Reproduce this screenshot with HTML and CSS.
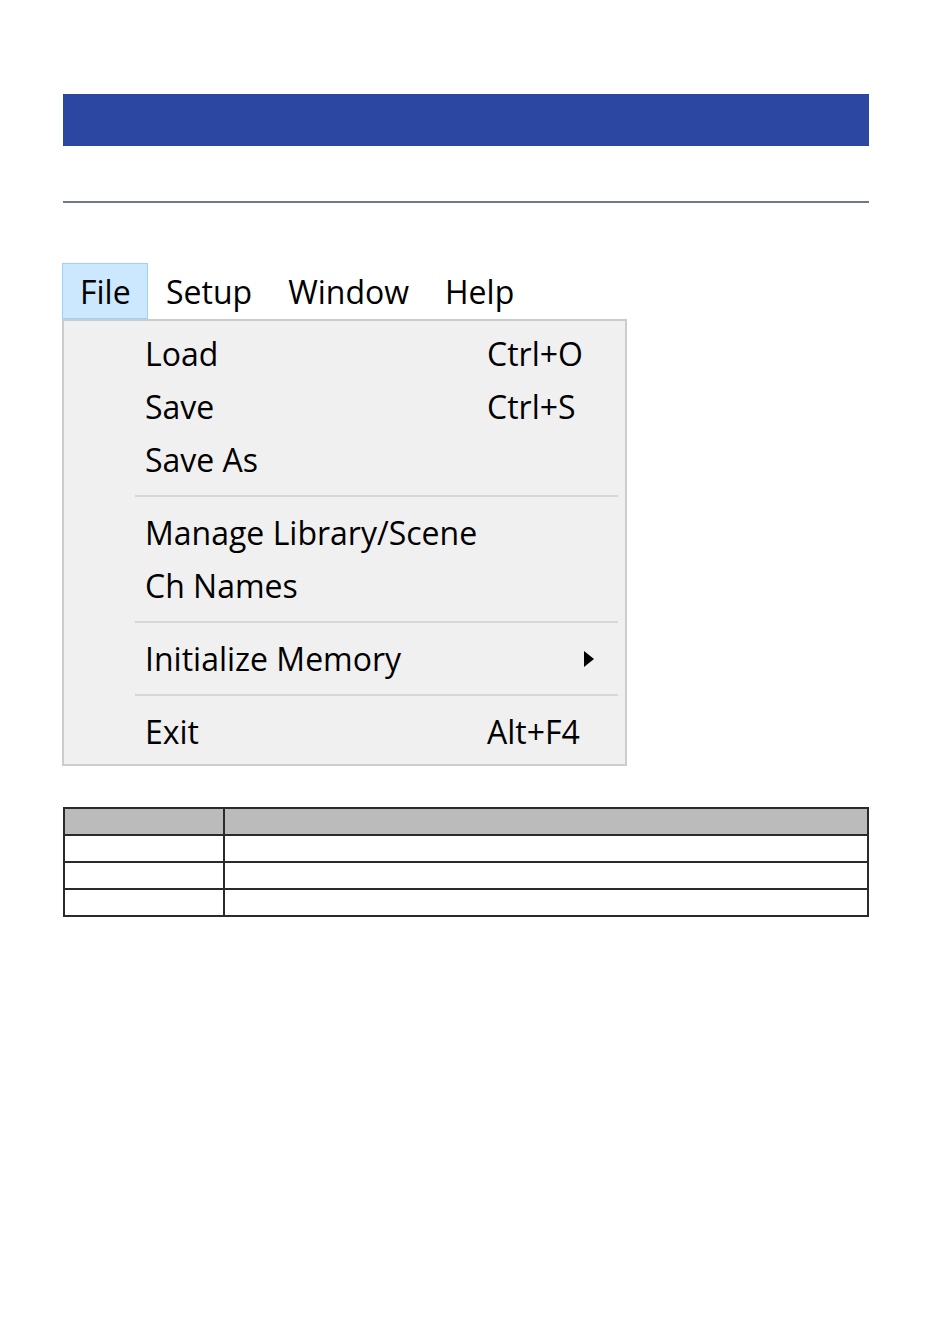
FILE: index.html
```html
<!DOCTYPE html>
<html lang="en">
<head>
    <meta charset="UTF-8">
    <meta name="viewport" content="width=device-width, initial-scale=1.0">
    <title>File menu</title>
    <link rel="stylesheet" href="styles.css">
</head>
<body>
    <div class="page">
        <div class="title-bar"></div>
        <div class="rule"></div>

        <div class="menu-shot">
            <ul class="menu-bar">
                <li class="menu-bar-item active">File</li>
                <li class="menu-bar-item">Setup</li>
                <li class="menu-bar-item">Window</li>
                <li class="menu-bar-item">Help</li>
            </ul>

            <ul class="dropdown">
                <li class="menu-item"><span class="label">Load</span><span class="shortcut">Ctrl+O</span></li>
                <li class="menu-item"><span class="label">Save</span><span class="shortcut">Ctrl+S</span></li>
                <li class="menu-item"><span class="label">Save As</span></li>
                <li class="separator"></li>
                <li class="menu-item"><span class="label">Manage Library/Scene</span></li>
                <li class="menu-item"><span class="label">Ch Names</span></li>
                <li class="separator"></li>
                <li class="menu-item has-sub">
                    <span class="label">Initialize Memory</span>
                    <svg class="sub-arrow" width="10" height="16" viewBox="0 0 10 16"><path d="M0 0 L10 8 L0 16 Z" fill="#000"/></svg>
                </li>
                <li class="separator"></li>
                <li class="menu-item"><span class="label">Exit</span><span class="shortcut">Alt+F4</span></li>
            </ul>
        </div>

        <table class="desc-table">
            <tr><th class="col-name"></th><th></th></tr>
            <tr><td></td><td></td></tr>
            <tr><td></td><td></td></tr>
            <tr><td></td><td></td></tr>
        </table>
    </div>
</body>
</html>
```

FILE: styles.css
```css
body {
    margin: 0;
    background-color: #fff;
    font-family: 'Open Sans', 'Noto Sans', sans-serif;
    color: #000;
}

.page {
    padding: 94px 64px 0 63px;
}

.title-bar {
    height: 52px;
    background-color: #2c47a1;
}

.rule {
    margin-top: 55px;
    height: 2px;
    background-color: #6e7891;
}

.menu-shot {
    margin-top: 60px;
    margin-left: -1px;
    width: 565px;
}

.menu-bar {
    display: flex;
    list-style-type: none;
    margin: 0;
    padding: 0;
}

.menu-bar-item {
    height: 56px;
    line-height: 58px;
    padding: 0 18px;
    font-size: 32px;
    box-sizing: border-box;
}

.menu-bar-item.active {
    background-color: #cce8ff;
    border: 1px solid #99d1ff;
    padding: 0 17px;
    line-height: 56px;
    width: 86px;
}

.dropdown {
    list-style-type: none;
    margin: 0;
    padding: 6px 0;
    background-color: #f0f0f0;
    border: 2px solid #cccccc;
}

.menu-item {
    display: flex;
    align-items: center;
    height: 53px;
    padding-left: 81px;
    font-size: 32px;
}

.menu-item .label {
    width: 342px;
    white-space: nowrap;
}

.shortcut {
    white-space: nowrap;
}

.has-sub .label {
    flex: 1;
}

.sub-arrow {
    margin-right: 31px;
}

.separator {
    height: 2px;
    margin: 9px 7px 9px 71px;
    background-color: #d7d7d7;
}

.desc-table {
    margin-top: 41px;
    width: 806px;
    border-collapse: collapse;
}

.desc-table th,
.desc-table td {
    height: 25px;
    padding: 0;
    border: 2px solid #2a2a2a;
}

.desc-table th {
    background-color: #bbbbbb;
}

.col-name {
    width: 158px;
}
```
